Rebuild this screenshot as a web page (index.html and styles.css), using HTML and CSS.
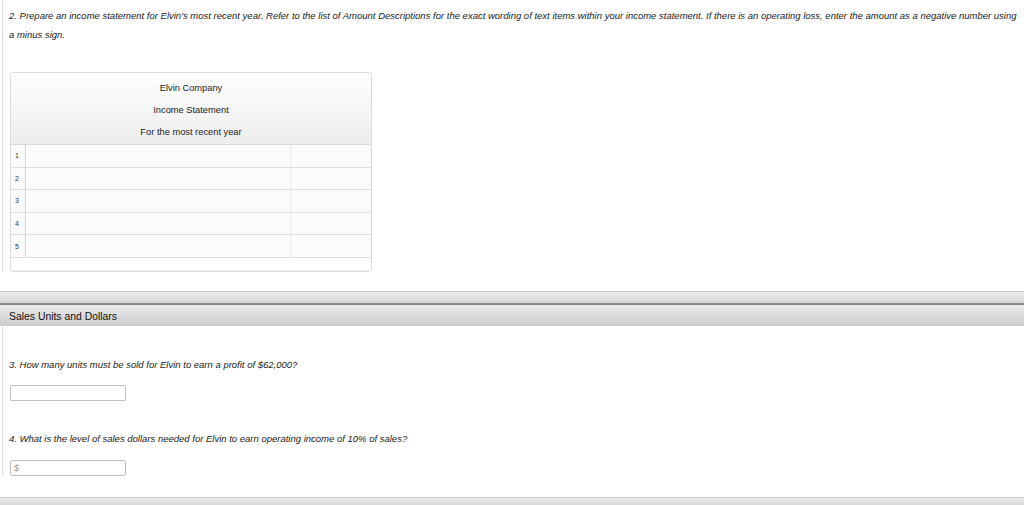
FILE: index.html
```html
<!DOCTYPE html>
<html lang="en">
<head>
    <meta charset="UTF-8">
    <meta name="viewport" content="width=device-width, initial-scale=1.0">
    <title>Income Statement</title>
    <link rel="stylesheet" href="styles.css">
</head>
<body>
    <div class="section">
        <p class="prompt intro">2. Prepare an income statement for Elvin's most recent year. Refer to the list of Amount Descriptions for the exact wording of text items within your income statement. If there is an operating loss, enter the amount as a negative number using a minus sign.</p>

        <div class="statement">
            <div class="statement-head">
                <div>Elvin Company</div>
                <div>Income Statement</div>
                <div>For the most recent year</div>
            </div>
            <table class="statement-rows">
                <tr><td class="num">1</td><td class="desc"></td><td class="amt"></td></tr>
                <tr><td class="num">2</td><td class="desc"></td><td class="amt"></td></tr>
                <tr><td class="num">3</td><td class="desc"></td><td class="amt"></td></tr>
                <tr><td class="num">4</td><td class="desc"></td><td class="amt"></td></tr>
                <tr><td class="num">5</td><td class="desc"></td><td class="amt"></td></tr>
            </table>
            <div class="statement-foot"></div>
        </div>
    </div>
    <div class="section-foot"></div>

    <div class="section-title">Sales Units and Dollars</div>
    <div class="section">
        <p class="prompt q3">3. How many units must be sold for Elvin to earn a profit of $62,000?</p>
        <div class="answer"></div>

        <p class="prompt q4">4. What is the level of sales dollars needed for Elvin to earn operating income of 10% of sales?</p>
        <div class="answer"><span class="unit">$</span></div>
    </div>
    <div class="section-foot bottom"></div>
</body>
</html>
```

FILE: styles.css
```css
body {
    margin: 0;
    font-family: 'Liberation Sans', Arial, sans-serif;
    color: #222;
    background: #fff;
}
.section {
    margin-left: 2px;
    border-left: 1px solid #dcdcdc;
    padding: 7px 0 0 6px;
}
.prompt {
    margin: 0;
    font-size: 9.5px;
    font-style: italic;
    line-height: 18.5px;
}
.intro {
    max-width: 1008px;
}
.statement {
    margin: 28px 0 19px 1px;
    width: 360px;
    border: 1px solid #dcdcdc;
    border-radius: 3px;
    overflow: hidden;
}
.statement-head {
    background: linear-gradient(#ffffff, #ededed);
    border-bottom: 1px solid #d8d8d8;
    text-align: center;
    font-size: 9.3px;
    line-height: 22px;
    padding: 4px 0 1px;
}
.statement-rows {
    width: 100%;
    border-collapse: collapse;
    background: #fbfbfb;
}
.statement-rows td {
    height: 21.6px;
    padding: 0;
    border-bottom: 1px solid #dedede;
}
.statement-rows .num {
    width: 10px;
    font-size: 7px;
    padding-left: 4px;
    border-right: 1px solid #d6d6d6;
    color: #333;
}
.statement-rows .desc {
    width: 264px;
    border-right: 1px solid #ebebeb;
}
.statement-foot {
    height: 12px;
    border-bottom: 1px solid #f0f0f0;
    background: #fff;
}
.section-foot {
    height: 11px;
    border-top: 1px solid #c4c4c4;
    background: linear-gradient(#ececec, #d6d6d6);
}
.section-title {
    border-top: 2px solid #8a8a8a;
    background: linear-gradient(#ececec, #cbcbcb);
    font-size: 10.4px;
    line-height: 19px;
    padding: 2px 0 0 9px;
    color: #111;
}
.q3 {
    margin-top: 23px;
}
.q4 {
    margin-top: 29px;
}
.answer {
    margin: 11px 0 0 1px;
    width: 114px;
    height: 14px;
    border: 1px solid #bdbdbd;
    border-radius: 2px;
    background: #fff;
    font-size: 9px;
    line-height: 14px;
}
.answer .unit {
    color: #999;
    padding-left: 3px;
}
.answer:last-child {
    margin-bottom: 21px;
}
.bottom {
    height: 8px;
}
```
